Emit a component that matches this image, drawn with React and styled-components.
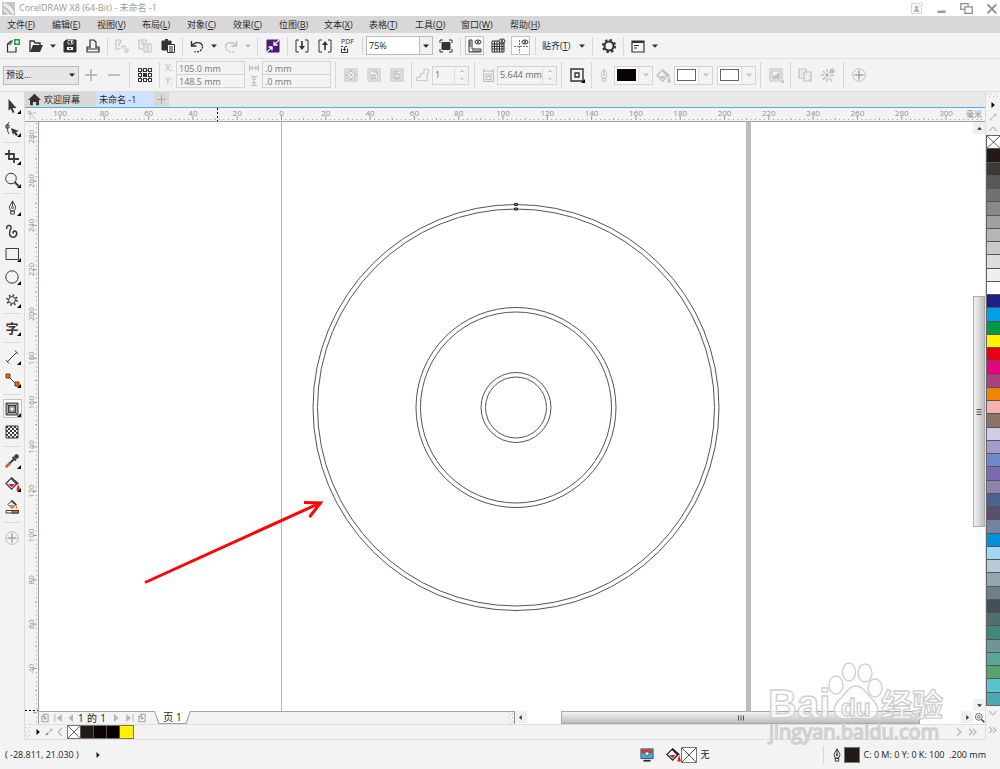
import React, { useState } from 'react';
import styled, { createGlobalStyle } from 'styled-components';

const GlobalStyle = createGlobalStyle`
  * { box-sizing: border-box; }
  body { margin: 0; }
  button, input, select {
    font: inherit;
    color: inherit;
    margin: 0;
    padding: 0;
    border: 0;
    border-radius: 0;
    background: none;
    min-width: 0;
  }
  svg { display: block; flex: none; }
`;

const Page = styled.div`
  min-height: 100vh;
  display: flex;
  flex-direction: column;
  background: #f3f3f3;
  color: #2b2b2b;
  font: 10px/12px 'Open Sans', 'Noto Sans CJK SC', sans-serif;
`;

const TitleBar = styled.header`
  display: flex;
  align-items: center;
  height: 16px;
  padding: 0 2px;
  gap: 4px;
  background: #fff;
  color: #999;
`;

const Title = styled.h1`
  flex: 1;
  margin: 0;
  font-size: 9px;
  font-weight: 400;
`;

const WindowButtons = styled.div`
  display: flex;
  gap: 12px;
`;

const WindowButton = styled.button`
  width: 13px;
  height: 14px;
`;

const MenuBar = styled.nav`
  display: flex;
  align-items: center;
  height: 17px;
  padding-left: 7px;
  background: #d8d8d8;
`;

const MenuItem = styled.button`
  width: ${(p) => p.$width || 45}px;
  text-align: left;
  white-space: nowrap;
  font-size: 9px;
`;

const StandardBar = styled.div`
  display: flex;
  align-items: center;
  height: 26px;
  padding-left: 1px;
  border-bottom: 1px solid #dedede;
`;

const PropertyBar = styled.div`
  display: flex;
  align-items: center;
  height: 33px;
  padding-left: 3px;
  border-bottom: 1px solid #dedede;
  color: #6b6b6b;
`;

const IconButton = styled.button`
  display: flex;
  align-items: center;
  justify-content: center;
  width: 23px;
  height: 23px;
  flex: none;
  color: ${(p) => (p.$dim ? '#bdbdbd' : '#333')};
`;

const CaretButton = styled(IconButton)`
  width: 11px;
`;

const Pressed = styled.span`
  display: flex;
  align-items: center;
  justify-content: center;
  width: 19px;
  height: 19px;
  border: 1px solid #c2c2c2;
  background: #fbfbfb;
`;

const Sep = styled.span`
  flex: none;
  display: flex;
  justify-content: center;
  width: ${(p) => p.$size || 6}px;
  height: ${(p) => (p.$tall ? 26 : 18)}px;
  &::before {
    content: '';
    width: 1px;
    background: #d6d6d6;
  }
`;

const SelectBox = styled.span`
  display: grid;
  align-items: center;
  flex: none;
  width: ${(p) => p.$width}px;
  height: 19px;
  margin: 0 ${(p) => p.$margin}px;
  border: 1px solid #bcbcbc;
  background: ${(p) => p.$bg};
  color: #222;
  > * { grid-area: 1 / 1; }
  > span {
    justify-self: end;
    display: flex;
    align-items: center;
    justify-content: center;
    width: 13px;
    height: 17px;
    pointer-events: none;
    border-left: ${(p) => (p.$divided ? '1px solid #bcbcbc' : '0')};
    background: ${(p) => (p.$divided ? '#f1f1f1' : 'none')};
  }
`;

const Select = styled.select`
  appearance: none;
  width: 100%;
  height: 17px;
  padding-left: 2px;
  font-size: 9px;
`;

const SnapButton = styled.button`
  width: 38px;
  padding-left: 4px;
  text-align: left;
  white-space: nowrap;
  font-size: 9px;
`;

const FieldStack = styled.div`
  display: flex;
  flex-direction: column;
  height: 27px;
`;

const FieldRow = styled.label`
  display: flex;
  align-items: center;
  height: 13px;
  color: #b5b5b5;
  font-size: 9px;
  > span {
    width: ${(p) => p.$label}px;
    display: flex;
    justify-content: center;
  }
`;

const Field = styled.input`
  && {
    width: 69px;
    height: 14px;
    padding-left: 2px;
    border: 1px solid #d4d4d4;
    color: #777;
    font-size: 9px;
  }
`;

const FieldIcon = styled.span`
  display: flex;
  justify-content: center;
  width: ${(p) => p.$width}px;
  color: #bdbdbd;
`;

const Spin = styled.span`
  display: flex;
  width: ${(p) => p.$width}px;
  height: 19px;
  border: 1px solid #d4d4d4;
  font-size: 9px;
`;

const SpinInput = styled.input`
  flex: 1;
  width: 0;
  && { padding-left: 2px; }
`;

const SpinButtons = styled.span`
  display: flex;
  flex-direction: column;
  width: 14px;
  border-left: 1px solid #dedede;
`;

const SpinButton = styled.button`
  flex: 1;
  display: flex;
  align-items: center;
  justify-content: center;
  color: #c4c4c4;
`;

const ColorPick = styled.button`
  && {
    display: flex;
    align-items: center;
    width: 39px;
    height: 19px;
    flex: none;
    margin-right: ${(p) => p.$margin || 0}px;
    border: 1px solid #d4d4d4;
    background: #fdfdfd;
  }
  > i {
    width: 19px;
    height: 12px;
    margin: 0 2px;
    border: 1px solid ${(p) => (p.$color === '#fff' ? '#666' : p.$color)};
    background: ${(p) => p.$color};
  }
  > span {
    flex: 1;
    height: 17px;
    display: flex;
    align-items: center;
    justify-content: center;
    border-left: 1px solid #dedede;
    color: #c4c4c4;
    background: #f3f3f3;
  }
`;

const Main = styled.main`
  flex: 1;
  display: flex;
`;

const Toolbox = styled.aside`
  width: 25px;
  flex: none;
  padding-top: 2px;
  border-right: 1px solid #dcdcdc;
`;

const Tool = styled.button`
  display: grid;
  place-items: center;
  width: 24px;
  height: 23px;
  color: ${(p) => (p.$dim ? '#bdbdbd' : '#3a3a3a')};
  > * { grid-area: 1 / 1; }
`;

const ToolFrame = styled.span`
  width: 19px;
  height: 19px;
  border: 1px solid ${(p) => (p.$on ? '#c2c2c2' : 'transparent')};
  background: ${(p) => (p.$on ? '#fff' : 'none')};
`;

const Flyout = styled.span`
  place-self: end;
  margin: 0 3px 3px 0;
  border: 2px solid #000;
  border-top-color: transparent;
  border-left-color: transparent;
`;

const ToolText = styled.span`
  font: 700 13px/16px 'Noto Sans CJK SC', sans-serif;
`;

const ToolSep = styled.div`
  display: flex;
  align-items: center;
  height: ${(p) => p.$size}px;
  padding: 0 3px;
  &::before {
    content: '';
    flex: 1;
    height: 1px;
    background: #dcdcdc;
  }
`;

const Workspace = styled.section`
  flex: 1;
  min-width: 0;
  display: flex;
  flex-direction: column;
`;

const Tabs = styled.div`
  display: flex;
  height: 16px;
  background: #e8e8e8;
  border-bottom: 1px solid #49b3e6;
`;

const Tab = styled.button`
  && {
    display: flex;
    align-items: center;
    gap: 3px;
    width: ${(p) => p.$width}px;
    padding: 0 3px;
    background: ${(p) => (p.$on ? '#cfe2ff' : '#d8d8d8')};
  }
  font-size: 9px;
  white-space: nowrap;
`;

const RulerRow = styled.div`
  position: relative;
  display: flex;
  height: 14px;
  border-bottom: 1px solid #a2a2a2;
`;

const Unit = styled.span`
  position: absolute;
  right: 2px;
  top: 0;
  padding: 0 1px;
  background: #f3f3f3;
  color: #8a8a8a;
  font-size: 8px;
  line-height: 11px;
`;

const Corner = styled.span`
  display: flex;
  align-items: center;
  justify-content: center;
  width: 14px;
  color: #a0a0a0;
`;

const RulerSvg = styled.svg`
  flex: 1;
  min-width: 0;
  height: 13px;
  font-size: 8px;
`;

const Body = styled.div`
  flex: 1;
  display: flex;
`;

const SideRuler = styled.div`
  display: flex;
  width: 14px;
  border-right: 1px solid #a2a2a2;
  svg {
    width: 13px;
    height: 100%;
    font-size: 8px;
  }
`;

const View = styled.div`
  position: relative;
  flex: 1;
  min-width: 0;
  display: flex;
  flex-direction: column;
`;

const CanvasRow = styled.div`
  flex: 1;
  min-height: 320px;
  display: flex;
  background: #fff;
`;

const Canvas = styled.svg`
  flex: 1;
  min-width: 0;
  height: auto;
`;

const VScroll = styled.div`
  display: flex;
  flex-direction: column;
  width: 12px;
`;

const HScroll = styled.div`
  flex: 471;
  display: flex;
  background: #fff;
`;

const ScrollButton = styled.button`
  && {
    display: flex;
    align-items: center;
    justify-content: center;
    width: 12px;
    height: 12px;
    flex: none;
    background: ${(p) => (p.$plain ? '#fff' : '#f0f0f0')};
    color: #333;
  }
`;

const Gap = styled.span`
  flex: ${(p) => p.$grow};
`;

const Thumb = styled.div`
  flex: ${(p) => p.$grow};
  display: flex;
  align-items: center;
  justify-content: center;
  border: 1px solid #a9a9a9;
  background: linear-gradient(${(p) => (p.$side ? 'to right' : 'to bottom')}, #f1f1f1, #dcdcdc 45%, #bcbcc0);
  color: #555;
`;

const NavRow = styled.div`
  display: flex;
  height: 13px;
`;

const PageNav = styled.div`
  flex: 475;
  display: flex;
  align-items: center;
  border-top: 1px solid #a2a2a2;
  border-right: 1px solid #8f8f8f;
  color: #222;
`;

const NavButton = styled.button`
  display: flex;
  align-items: center;
  justify-content: center;
  width: ${(p) => p.$width || 14}px;
  height: 12px;
  color: #b5b5b5;
`;

const PageCount = styled.span`
  width: 32px;
  display: flex;
  justify-content: space-between;
  padding: 0 2px;
`;

const PageTab = styled.button`
  && {
    width: 37px;
    height: 13px;
    margin: -1px 0 0 5px;
    padding: 0 0 1px;
    background: #a2a2a2;
  }
  clip-path: polygon(0 0, 100% 0, 88% 100%, 12% 100%);
  > span {
    display: block;
    height: 12px;
    background: #fff;
    clip-path: polygon(1px 0, calc(100% - 1px) 0, calc(88% - 1px) 100%, calc(12% + 1px) 100%);
  }
`;

const GripDots = styled.svg`
  margin-left: auto;
  fill: #c4c4c4;
`;

const DocPalette = styled.div`
  display: flex;
  align-items: center;
  height: 16px;
  border-top: 1px solid #dedede;
  border-bottom: 1px solid #dcdcdc;
`;

const DocSwatches = styled.div`
  display: flex;
  height: 14px;
  border: 1px solid #777;
`;

const Swatch = styled.button`
  && {
    display: block;
    width: 13px;
    background: ${(p) => p.$color};
    border: solid #555;
    border-width: ${(p) => (p.$stacked ? '0 0 1px' : '0 1px 0 0')};
  }
  &&:last-child { border-width: 0; }
`;

const MoreColors = styled.span`
  display: flex;
  margin-left: auto;
  padding-right: 5px;
`;

const ColorColumn = styled.aside`
  display: flex;
  flex-direction: column;
  width: 15px;
  flex: none;
  border-left: 1px solid #dcdcdc;
`;

const ColumnButton = styled.button`
  && {
    display: flex;
    align-items: center;
    justify-content: center;
    width: 14px;
    height: ${(p) => p.$height}px;
    color: ${(p) => (p.$dark ? '#000' : '#b9b9b9')};
  }
`;

const ColorList = styled.div`
  flex: 1;
  display: flex;
  flex-direction: column;
  border: 1px solid #666;
  > button {
    flex: 1;
    min-height: 6px;
    && { width: 12px; }
  }
`;

const StatusBar = styled.footer`
  display: flex;
  align-items: center;
  height: 29px;
  padding: 0 14px 0 5px;
  font-size: 9px;
  color: #222;
`;

const StatusGroup = styled.div`
  display: flex;
  align-items: center;
  gap: ${(p) => p.$gap || 0}px;
`;

const StatusSwatch = styled.span`
  display: flex;
  align-items: center;
  justify-content: center;
  width: 16px;
  height: 16px;
  margin-right: 4px;
  border: 1px solid #777;
  background: ${(p) => p.$color};
`;

const FillStatus = styled(StatusGroup)`
  width: 178px;
`;

const Watermark = styled.svg`
  position: absolute;
  right: 38px;
  bottom: -24px;
  width: 182px;
  height: 90px;
  pointer-events: none;
`;

// stroke icons on a 16px grid
const Icon = ({ size = 16, width = 1, children, ...rest }) => (
  <svg width={size} height={size} viewBox="0 0 16 16" fill="none" stroke="currentColor" strokeWidth={width} aria-hidden="true" {...rest}>
    {children}
  </svg>
);

const Caret = ({ dir = 'down', size = 6 }) => {
  const turn = { down: 0, left: 90, up: 180, right: 270 }[dir];
  return (
    <svg width={size} height={size} viewBox="0 0 6 6" aria-hidden="true">
      <path d="M0 1.5h6L3 4.8z" fill="currentColor" transform={`rotate(${turn} 3 3)`} />
    </svg>
  );
};

const Cross = () => (
  <svg width="100%" height="100%" viewBox="0 0 12 12" preserveAspectRatio="none" stroke="#444" strokeWidth=".8" aria-hidden="true">
    <path d="M0 0l12 12M12 0L0 12" />
  </svg>
);

const Grip = () => (
  <GripDots width="6" height="11" aria-hidden="true">
    {[0, 2, 4, 6, 8, 10].map((y) => (
      <path key={y} d={y % 4 ? `M2 ${y}h1v1H2z` : `M0 ${y}h1v1H0zM4 ${y}h1v1H4z`} />
    ))}
  </GripDots>
);

const Chevrons = ({ dir = 'right', double }) => {
  const turn = { right: 0, down: 90, left: 180, up: 270 }[dir];
  return (
    <Icon size={12} width={1.6}>
      <g transform={`rotate(${turn} 8 8)`}>
        {double ? <path d="M3 4l4 4-4 4M8 4l4 4-4 4" /> : <path d="M5.5 3l5 5-5 5" />}
      </g>
    </Icon>
  );
};

const Bucket = ({ color }) => (
  <Icon size={15}>
    <path d="M7 2l6 6-6 6-6-6z" strokeWidth="1.3" />
    <path d="M7 1l8 7-3 1-6-6z" fill="currentColor" stroke="none" />
    <path d="M3.5 8.500h7L7 12z" fill={color} stroke="none" />
    <path d="M14 8.500l2 7h-4z" fill={color} stroke="none" />
  </Icon>
);

const Pen = ({ size = 14 }) => (
  <Icon size={size}>
    <path d="M8 1L4.500 7.500l1.500 4h4l1.500-4zM6 12h4v3H6zM8 1v6" />
    <circle cx="8" cy="8" r="1" />
  </Icon>
);

const Dropper = ({ size = 8, tip = 'currentColor' }) => (
  <Icon size={size} width={1.8}>
    <path d="M2 14l8-8" />
    <path d="M2 14l4-4" stroke={tip} strokeWidth="2.5" />
    <circle cx="12.500" cy="3.500" r="2.300" fill="currentColor" stroke="none" />
    <path d="M8.500 4l3.500 3.500" />
  </Icon>
);

const icons = {
  newDoc: (
    <Icon>
      <path d="M8 3H6L2.500 6v8H11V9" strokeWidth="1.2" /><path d="M6 3v3H3" />
      <path d="M9 1h6v6H9z" fill="#21a148" stroke="none" /><path d="M12 2v4M10 4h4" stroke="#fff" />
    </Icon>
  ),
  open: (
    <Icon>
      <path d="M2 14V3h4l1 2h5v2" strokeWidth="1.3" /><path d="M2 14L5 7h10l-3 7z" fill="currentColor" stroke="none" />
    </Icon>
  ),
  save: (
    <Icon>
      <path d="M2 4l2-2h10v12H2z" fill="currentColor" />
      <path d="M6 2.500h5v3.500H6z" fill="currentColor" stroke="#f3f3f3" strokeWidth=".7" /><path d="M9.500 3v2" stroke="#f3f3f3" />
      <path d="M5 9h6v3H5z" fill="#f3f3f3" stroke="none" /><path d="M7 10.500h2" />
    </Icon>
  ),
  print: (
    <Icon width={1.2}>
      <path d="M5 10V2h4l2 2v6M5 9H2v5h12V9h-3M2 11h12" />
    </Icon>
  ),
  cut: (
    <Icon>
      <path d="M2 2h5v3M2 2v9h4M4 5h3M4 7h2M8 8h3v2M8 8v3M11 11h3v3h-3z" />
    </Icon>
  ),
  copy: (
    <Icon>
      <path d="M2 2h7v3M2 2v9h4M4 4h3M4 6h3M7 6h7v8H7zM9 8h3M9 10h3M9 12h3" />
    </Icon>
  ),
  paste: (
    <Icon>
      <path d="M2 3h9v3H7v6H2z" fill="currentColor" /><path d="M5 2h3" strokeWidth="2" />
      <path d="M7.500 6.500h7v8h-7zM9 9h4M9 11h4M9 13h4" />
    </Icon>
  ),
  undo: (
    <Icon>
      <path d="M2.500 3v5h5M3 8c2-4 9-5 10.500 0" strokeWidth="1.4" /><path d="M13.500 8.500c0 4-4 6-8 5" strokeWidth="1.4" strokeDasharray="2 1.2" />
    </Icon>
  ),
  redo: (
    <Icon>
      <path d="M13.500 3v5h-5M13 8c-2-4-9-5-10.500 0" strokeWidth="1.4" /><path d="M2.500 8.500c0 4 4 6 8 5" strokeWidth="1.4" strokeDasharray="2 1.2" />
    </Icon>
  ),
  connect: (
    <Icon>
      <path d="M2 2h12v12H2z" fill="#4b1a78" stroke="#4b1a78" />
      <path d="M14 2L9.500 6.500M9 3.500V7h3.500M2 14l4.500-4.500M3.500 9H7v3.500" stroke="#fff" strokeWidth="1.3" />
    </Icon>
  ),
  importFile: (
    <Icon>
      <path d="M5 2H2v12h3M11 2h3v12h-3" /><path d="M8 3v7" strokeWidth="1.6" /><path d="M5 8h6l-3 4z" fill="currentColor" stroke="none" />
    </Icon>
  ),
  exportFile: (
    <Icon>
      <path d="M5 2H2v12h3M11 2h3v12h-3" /><path d="M8 5v7" strokeWidth="1.6" /><path d="M5 7h6L8 3z" fill="currentColor" stroke="none" />
    </Icon>
  ),
  full: (
    <Icon>
      <path d="M4 4.500h8v7H4z" fill="currentColor" /><path d="M2 5V2h3M11 2h3v3M14 11v3h-3M5 14H2v-3" />
    </Icon>
  ),
  rulers: (
    <Icon>
      <path d="M2 2h3v9h9v3H2zM2 4h2M2 6h2M2 8h2M6 14v-2M8 14v-2M10 14v-2M12 14v-2" />
      <ellipse cx="11" cy="4" rx="3" ry="2" /><circle cx="11" cy="4" r=".8" />
    </Icon>
  ),
  grid: (
    <Icon>
      <path d="M2 3h12v11H2zM2 6h12M2 8.500h12M2 11h12M4.500 3v11M7 3v11M9.500 3v11M12 3v11" />
      <ellipse cx="12" cy="3" rx="3" ry="2" fill="#f3f3f3" /><circle cx="12" cy="3" r=".8" />
    </Icon>
  ),
  guides: (
    <Icon>
      <path d="M1 8.500h14M6.500 2v13" strokeDasharray="2 1" stroke="#777" /><ellipse cx="12" cy="4" rx="3" ry="2" /><circle cx="12" cy="4" r=".8" />
    </Icon>
  ),
  gear: (
    <Icon>
      <circle cx="8" cy="8" r="4.500" strokeWidth="2" /><circle cx="8" cy="8" r="6.200" strokeWidth="1.800" strokeDasharray="2.430 2.440" />
    </Icon>
  ),
  launcher: (
    <Icon width={1.2}>
      <path d="M2 3h12v11H2z" /><path d="M2 4h12" strokeWidth="2" /><path d="M4 7.500h5M4 10h3" />
    </Icon>
  ),
  origin: (
    <Icon>
      <path d="M3.500 3.500h9v9h-9z" strokeDasharray="1 .6" />
      {[3, 8, 13].map((y) => [3, 8, 13].map((x) => (
        <rect key={`${x}-${y}`} x={x - 1.5} y={y - 1.5} width="3" height="3" fill={x === 8 && y === 8 ? 'currentColor' : '#f3f3f3'} />
      )))}
    </Icon>
  ),
  plus: <Icon><path d="M8 2v12M2 8h12" strokeWidth="1.4" stroke="#aaa" /></Icon>,
  minus: <Icon><path d="M2 8h12" strokeWidth="1.4" stroke="#aaa" /></Icon>,
  plusCircle: <Icon><circle cx="8" cy="8" r="6.300" /><path d="M8 3.500v9M3.500 8h9" strokeWidth="1.500" stroke="#a5a5a5" /></Icon>,
  toCenter: <Icon><path d="M2 2h12v12H2zM4 4h8v8H4zM5 5l6 6M11 5l-6 6" /><path d="M7 4h2M7 12h2M4 7v2M12 7v2" strokeWidth="2" /></Icon>,
  inside: <Icon><path d="M2 2h12v12H2zM4 4h8v8H4z" /><path d="M6 8h3v3H6zM8 5h3v3" strokeWidth="1.300" /></Icon>,
  outside: <Icon><path d="M2 2h12v12H2z" /><path d="M4 4h8v8H4z" /><path d="M6 7h4v4H6zM5 5h3" strokeWidth="1.300" /></Icon>,
  steps: <Icon size={14}><path d="M1 14.500v-4h4v-4h4v-5h5.500v4H13v4h-.5v5z" /></Icon>,
  offset: <Icon size={13}><path d="M1 2.500h14M2 0v5M14 0v5M2 6.500h12v9H2zM5 9h6v4H5z" strokeWidth="1.400" /></Icon>,
  corners: (
    <Icon width={1.4}>
      <path d="M2 2h12v12H2z" /><path d="M6 6h4v4H6z" /><path d="M16 12v4h-4z" fill="#000" stroke="none" />
    </Icon>
  ),
  speed: (
    <Icon>
      <path d="M2 2h12v12H2zM4 4h8v8H4z" /><path d="M5 11V9h2V8h2V6h2v5z" fill="currentColor" stroke="none" />
      <path d="M16 13v3h-3z" fill="currentColor" stroke="none" />
    </Icon>
  ),
  copyProps: <Icon><path d="M2 2h7v3M2 2v9h4M4 4h1M5 6h1M4 8h1M7 5h7v9H7zM9 7h1M11 9h1M9 11h1M12 12h1" strokeWidth="1.2" /></Icon>,
  clear: (
    <Icon>
      <path d="M7 2v3M7 11v4M1 8h3M10 8.500h4M3 4l2 2M3 13l2-3M9 11l3 3M9 6l1-1" strokeWidth="1.400" /><circle cx="7" cy="8" r="1.500" fill="currentColor" />
      <circle cx="12" cy="4" r="2.500" fill="currentColor" stroke="none" />
    </Icon>
  ),
  pick: <Icon><path d="M4.500 1l8 9-4 .2 2 4-1.800.8-2-4.200-2.200 2z" fill="currentColor" stroke="none" /></Icon>,
  shape: <Icon><path d="M5 1C2 5 3 9 5 13M2 4h3v3H2z" /><path d="M7 7l8 3-3 1 2 3-2 1-2-3-1 2z" fill="currentColor" stroke="none" /></Icon>,
  crop: <Icon width={1.8}><path d="M1 5h9v9M5 1v9h10" /></Icon>,
  zoom: <Icon><circle cx="7" cy="6.500" r="5.300" /><path d="M10.500 10l4 4" strokeWidth="2" /></Icon>,
  curve: <Icon><path d="M3 6c-2-4 5-5 4-1-1 3-3 8 1 9 5 1 6-5 3-6-2 0-3 2-1 2" strokeWidth="1.500" /></Icon>,
  rect: <Icon><path d="M2 2.500h12.500v11H2z" /></Icon>,
  ellipse: <Icon><circle cx="8" cy="8" r="6.200" /></Icon>,
  polygon: <Icon><circle cx="8" cy="8" r="3.400" /><circle cx="8" cy="8" r="4.800" strokeWidth="2" strokeDasharray="1.600 2.170" /></Icon>,
  dimension: <Icon><path d="M3 13L13 3" /><path d="M2 11l3 3.500M11 1.500l3 3.500" /></Icon>,
  connector: (
    <Icon>
      <path d="M4 4l8 8" /><path d="M2 2h4v4H2zM11 10h4v4h-4z" fill="#f26b0f" stroke="#6b3a18" />
    </Icon>
  ),
  contour: (
    <Icon>
      <path d="M2 2h12v12H2z" fill="#aaa" /><path d="M4.500 4.500h7v7h-7z" fill="#ddd" /><path d="M2 2l4 4M14 2l-4 4M2 14l4-4M14 14l-4-4" strokeWidth=".7" />
      <path d="M6 6h4v4H6z" fill="#fff" strokeWidth=".8" />
    </Icon>
  ),
  checker: (
    <Icon>
      <path d="M2 2h12v12H2z" />
      {[0, 1, 2, 3, 4, 5].map((r) => [0, 1, 2].map((c) => (
        <rect key={`${r}-${c}`} x={2 + c * 4 + (r % 2) * 2} y={2 + r * 2} width="2" height="2" fill="currentColor" stroke="none" />
      )))}
    </Icon>
  ),
  dropper: <Dropper size={16} tip="#b5673a" />,
  fill: <Bucket color="#e11" />,
  mesh: (
    <Icon>
      <path d="M8 1.500l4 4-4 4-4-4z" /><path d="M8 1l5 4.500-2 .5-4-3.500z" fill="currentColor" stroke="none" />
      <path d="M6 6h4L8 8.500zM12.500 6l1 3.500h-2z" fill="#f26b0f" stroke="none" />
      <path d="M2 11.500h12.500v2.500H2z" fill="#fff" /><path d="M8 11.500h6.500v2.500H8z" fill="#f26b0f" />
    </Icon>
  ),
  home: <Icon size={13}><path d="M8 1L0 8.500h2.500V15H6v-4h4v4h3.500V8.500H16z" fill="#333" stroke="none" /></Icon>,
  page: <Icon size={10}><path d="M6 2h7v12H3V5zM3 6h4V2M8 6v5M5.500 8.500h5" stroke="#777" /></Icon>,
};

const menus = [
  ['文件', 'F'], ['编辑', 'E'], ['视图', 'V'], ['布局', 'L'], ['对象', 'C', 46], ['效果', 'C', 46], ['位图', 'B'],
  ['文本', 'X'], ['表格', 'T', 46], ['工具', 'O', 46], ['窗口', 'W', 49], ['帮助', 'H'],
];

// tool name and whether it has a flyout; a number is a divider of that height
const tools = [
  ['pick', 1], ['shape', 1], 5, ['crop', 1], ['zoom', 1], 5, ['pen', 1], ['curve', 0], ['rect', 1], ['ellipse', 1],
  ['polygon', 1], 5, ['text', 1], 6, ['dimension', 1], ['connector', 1], 6, ['contour', 1], ['checker', 0], 6,
  ['dropper', 1], ['fill', 1], ['mesh', 0], 8, ['plusCircle', 0],
];

const palette = [
  '#231916', '#3e3a39', '#595757', '#727171', '#898989', '#9fa0a0', '#b5b5b6', '#c9caca', '#dcdddd', '#efefef', '#ffffff',
  '#1d2088', '#00a0e9', '#009944', '#fff100', '#e60012', '#e4007f', '#ad4081', '#f08300', '#f4b3b3', '#8b7365', '#d0cce6',
  '#a59aca', '#6c8ac8', '#7b69b0', '#8f82ad', '#4c6390', '#584f6e', '#7286a4', '#0090dc', '#9fd9f6', '#b5cbd7', '#93a5ae',
  '#6f7f87', '#444f57', '#50706c', '#3f8a78', '#6f9695', '#55a896', '#59a26e', '#5bc2d0', '#4da8b5',
];

// pixels per millimetre at 75% zoom
const SCALE = 2.215;

const tickLength = (mm) => {
  if (mm % 20 === 0) return 4;
  return mm % 10 === 0 ? 2 : 1;
};

const TopRuler = () => {
  const marks = [];
  for (let mm = -108; mm <= 500; mm += 2) marks.push(mm);
  return (
    <RulerSvg aria-hidden="true">
      {marks.map((mm) => {
        const x = 242.5 + mm * SCALE;
        const len = tickLength(mm);
        return <path key={mm} d={`M${x} ${12 - len}v${len}`} stroke="#999" />;
      })}
      {marks.filter((mm) => mm % 20 === 0 && mm < 310).map((mm) => (
        <text key={mm} x={242.5 + mm * SCALE} y="8" textAnchor="middle" fill="#8f8f8f">{Math.abs(mm)}</text>
      ))}
      <path d="M178.500 0v13" stroke="#000" strokeDasharray="2 2" />
    </RulerSvg>
  );
};

const LeftRuler = () => {
  const marks = [];
  for (let mm = 286; mm >= 16; mm -= 2) marks.push(mm);
  return (
    <SideRuler>
      <svg aria-hidden="true">
        {marks.map((mm) => {
          const y = 635 - mm * SCALE;
          const len = tickLength(mm);
          return <path key={mm} d={`M${12 - len} ${y}h${len}`} stroke="#999" />;
        })}
        {marks.filter((mm) => mm % 20 === 0 && mm > 20).map((mm) => {
          const y = 635 - mm * SCALE;
          return <text key={mm} x="9" y={y} transform={`rotate(-90 9 ${y})`} textAnchor="middle" fill="#8f8f8f">{mm}</text>;
        })}
        <path d="M0 588.500h13" stroke="#000" strokeDasharray="2 2" />
      </svg>
    </SideRuler>
  );
};

const Drawing = () => (
  <Canvas role="img" aria-label="绘图页面">
    <path d="M242.500 0v2000" stroke="#b8b8b8" />
    <path d="M709.500 0v2000" stroke="#bdbdbd" strokeWidth="5" />
    <g fill="none" stroke="#555">
      {[203, 198.5, 100, 95.5, 35, 30.5].map((r) => <circle key={r} cx="477" cy="285.500" r={r} />)}
    </g>
    <path d="M475.500 81.500h3v2h-3zM475.500 86h3v2h-3z" fill="#888" stroke="#222" />
    <path d="M106 460.500L281 381M265 380.500l16.500.5-11 14" fill="none" stroke="#fe0505" strokeWidth="3" />
  </Canvas>
);

const BaiduMark = () => (
  <Watermark viewBox="0 0 182 90" fontFamily="'Open Sans', 'Noto Sans CJK SC', sans-serif" aria-hidden="true">
    <g fill="#fff" fillOpacity=".7" stroke="#cfcfcf" strokeWidth="1.4">
      <ellipse cx="71" cy="27" rx="7" ry="9" />
      <ellipse cx="84" cy="14" rx="6.500" ry="9" />
      <ellipse cx="100" cy="15" rx="7" ry="9" />
      <ellipse cx="110" cy="30" rx="7" ry="9" />
      <path d="M91 28c8 0 10 8 17 14 8 8 5 19-5 19-5 0-8-1-12-1s-7 1-12 1c-10 0-13-11-5-19 7-6 9-14 17-14z" />
      <text x="3" y="60" fontSize="40" fontWeight="700" fontFamily="'Liberation Sans', sans-serif">Bai</text>
      <text x="76" y="58" fontSize="24" fontWeight="700" fontFamily="'Liberation Sans', sans-serif">du</text>
      <text x="116" y="58" fontSize="31" fontWeight="700">经验</text>
      <text x="4" y="81" fontSize="20">jingyan.baidu.com</text>
    </g>
  </Watermark>
);

const SpinBox = ({ label, value, width }) => (
  <Spin $width={width}>
    <SpinInput aria-label={label} defaultValue={value} />
    <SpinButtons>
      <SpinButton aria-label="增加"><Caret dir="up" size={4} /></SpinButton>
      <SpinButton aria-label="减少"><Caret size={4} /></SpinButton>
    </SpinButtons>
  </Spin>
);

const App = () => {
  const [tool, setTool] = useState('contour');
  const button = (name, label, dim) => <IconButton key={name} $dim={dim} aria-label={label}>{icons[name]}</IconButton>;

  return (
    <Page>
      <GlobalStyle />
      <TitleBar>
        <svg width="13" height="13" viewBox="0 0 13 13" aria-hidden="true">
          <path d="M0 0h13v13H0z" fill="#c4c4c4" /><path d="M1 3c4 1 7 4 10 9M2 1c4 2 7 5 10 10M1 7c2 1 4 3 6 6" stroke="#fff" strokeWidth="1.2" fill="none" />
        </svg>
        <Title>CorelDRAW X8 (64-Bit) - 未命名 -1</Title>
        <WindowButtons>
          <WindowButton aria-label="登录">
            <Icon size={13} stroke="#c4c4c4">
              <path d="M10 2H2v12h12V7" /><path d="M4 12h8l-2-3H6z" fill="#aaa" stroke="none" />
              <circle cx="8" cy="6.500" r="2" fill="#aaa" stroke="none" /><circle cx="13" cy="3" r="2.300" />
            </Icon>
          </WindowButton>
          <WindowButton aria-label="最小化"><Icon size={13} stroke="#999"><path d="M3 12h10" strokeWidth="3" /></Icon></WindowButton>
          <WindowButton aria-label="还原"><Icon size={13} stroke="#888"><path d="M5 9H1V2h9v3M6 6h9v8H6z" strokeWidth="1.500" /></Icon></WindowButton>
          <WindowButton aria-label="关闭"><Icon size={13} stroke="#888"><path d="M3 3l11 11M14 3L3 14" strokeWidth="2" /></Icon></WindowButton>
        </WindowButtons>
      </TitleBar>

      <MenuBar>
        {menus.map(([name, key, width]) => (
          <MenuItem key={name} $width={width}>{name}(<u>{key}</u>)</MenuItem>
        ))}
      </MenuBar>

      <StandardBar>
        {button('newDoc', '新建')}
        {button('open', '打开')}
        <CaretButton aria-label="最近文档"><Caret /></CaretButton>
        {button('save', '保存')}
        {button('print', '打印')}
        <Sep />
        {button('cut', '剪切', true)}
        {button('copy', '复制', true)}
        {button('paste', '粘贴')}
        <Sep />
        {button('undo', '撤消')}
        <CaretButton aria-label="撤消列表"><Caret /></CaretButton>
        {button('redo', '重做', true)}
        <CaretButton $dim aria-label="重做列表"><Caret /></CaretButton>
        <Sep $size={8} />
        {button('connect', '搜索内容')}
        <Sep />
        {button('importFile', '导入')}
        {button('exportFile', '导出')}
        <IconButton aria-label="发布为 PDF">
          <svg width="15" height="16" viewBox="0 0 15 16" fill="none" stroke="currentColor" aria-hidden="true">
            <text x="1" y="6" fontSize="7" fill="currentColor" stroke="none">PDF</text>
            <path d="M1 8.500h2M5 8.500h2M1.500 10.500v4h6v-4M4.500 9v4M3 11.500h3" />
          </svg>
        </IconButton>
        <Sep />
        <SelectBox $width={67} $margin={1} $bg="#fff" $divided>
          <Select aria-label="缩放级别" defaultValue="75%"><option>75%</option><option>100%</option></Select>
          <span><Caret /></span>
        </SelectBox>
        {button('full', '全屏预览')}
        <Sep />
        <IconButton aria-label="显示标尺"><Pressed>{icons.rulers}</Pressed></IconButton>
        {button('grid', '显示网格')}
        <IconButton aria-label="显示辅助线"><Pressed>{icons.guides}</Pressed></IconButton>
        <Sep />
        <SnapButton>贴齐(<u>T</u>)</SnapButton>
        <CaretButton aria-label="贴齐选项"><Caret /></CaretButton>
        <Sep $size={10} />
        {button('gear', '选项')}
        <Sep />
        {button('launcher', '应用程序启动器')}
        <CaretButton aria-label="启动器列表"><Caret /></CaretButton>
      </StandardBar>

      <PropertyBar>
        <SelectBox $width={76} $margin={0} $bg="#e6e6e6">
          <Select aria-label="预设" defaultValue="预设..."><option>预设...</option></Select>
          <span><Caret /></span>
        </SelectBox>
        {button('plus', '添加预设', true)}
        {button('minus', '删除预设', true)}
        <Sep $size={8} $tall />
        {button('origin', '对象原点')}
        <Sep $tall />
        <FieldStack>
          <FieldRow $label={14}><span>X:</span><Field defaultValue="105.0 mm" /></FieldRow>
          <FieldRow $label={14}><span>Y:</span><Field defaultValue="148.5 mm" /></FieldRow>
        </FieldStack>
        <FieldStack>
          <FieldRow $label={17}>
            <span><Icon size={10}><path d="M1 3v10M15 3v10M1 8h14M5 5v6M11 5v6" strokeWidth="1.500" /></Icon></span>
            <Field aria-label="宽度" defaultValue=".0 mm" />
          </FieldRow>
          <FieldRow $label={17}>
            <span><Icon size={10}><path d="M3 1h10M3 15h10M8 1v14M5 5h6M5 11h6" strokeWidth="1.500" /></Icon></span>
            <Field aria-label="高度" defaultValue=".0 mm" />
          </FieldRow>
        </FieldStack>
        <Sep $size={8} $tall />
        {button('toCenter', '到中心', true)}
        {button('inside', '内部轮廓', true)}
        {button('outside', '外部轮廓', true)}
        <Sep $tall />
        <FieldIcon $width={18}>{icons.steps}</FieldIcon>
        <SpinBox label="轮廓图步长" value="1" width={37} />
        <Sep $size={10} $tall />
        <FieldIcon $width={18}>{icons.offset}</FieldIcon>
        <SpinBox label="轮廓图偏移" value="5.644 mm" width={60} />
        <Sep $size={8} $tall />
        {button('corners', '轮廓图角')}
        <Sep $tall />
        <FieldIcon $width={20}><Pen /></FieldIcon>
        <ColorPick $color="#0a0202" aria-label="轮廓色"><i /><span><Caret /></span></ColorPick>
        <FieldIcon $width={21}><Bucket color="currentColor" /></FieldIcon>
        <ColorPick $color="#fff" $margin={4} aria-label="填充色"><i /><span><Caret /></span></ColorPick>
        <ColorPick $color="#fff" aria-label="最后一个填充挑选器"><i /><span><Caret /></span></ColorPick>
        <Sep $size={8} $tall />
        {button('speed', '对象和颜色加速', true)}
        <Sep $tall />
        {button('copyProps', '复制轮廓图属性', true)}
        {button('clear', '清除轮廓', true)}
        <Sep $size={8} $tall />
        {button('plusCircle', '快速自定义', true)}
      </PropertyBar>

      <Main>
        <Toolbox>
          {tools.map((item, i) => {
            if (typeof item === 'number') return <ToolSep key={i} $size={item} />;
            const [name, flyout] = item;
            return (
              <Tool key={name} aria-label={name} $dim={name === 'plusCircle'} onClick={() => setTool(name)}>
                <ToolFrame $on={tool === name} />
                {name === 'text' ? <ToolText>字</ToolText> : name === 'pen' ? <Pen size={15} /> : icons[name]}
                {flyout ? <Flyout /> : null}
              </Tool>
            );
          })}
        </Toolbox>

        <Workspace>
          <Tabs>
            <Tab $width={71}>{icons.home}欢迎屏幕</Tab>
            <Tab $width={58} $on>未命名 -1</Tab>
            <Tab $width={15} aria-label="新建文档"><Icon size={9} width={2} stroke="#aaa"><path d="M8 0v16M0 8h16" /></Icon></Tab>
          </Tabs>
          <RulerRow>
            <Corner><Icon size={10}><path d="M1 5h14M5 1v14M5 5l9 10M1 1l4 4" strokeWidth="1.300" strokeDasharray="3 1" /></Icon></Corner>
            <TopRuler />
            <Unit>毫米</Unit>
          </RulerRow>
          <Body>
            <LeftRuler />
            <View>
              <CanvasRow>
                <Drawing />
                <VScroll>
                  <ScrollButton aria-label="向上"><Caret dir="up" size={5} /></ScrollButton>
                  <Gap $grow={163} />
                  <Thumb $side $grow={229}><Icon size={8} width={2}><path d="M3 3h10M3 8h10M3 13h10" /></Icon></Thumb>
                  <Gap $grow={173} />
                  <ScrollButton aria-label="向下"><Caret size={5} /></ScrollButton>
                </VScroll>
              </CanvasRow>
              <NavRow>
                <PageNav>
                  <NavButton $width={12} aria-label="添加页面">{icons.page}</NavButton>
                  <NavButton aria-label="首页"><Icon size={10} width={1.6}><path d="M3 2v12" /><path d="M14 2v12L6 8z" fill="currentColor" stroke="none" /></Icon></NavButton>
                  <NavButton $width={11} aria-label="上一页"><Caret dir="left" size={8} /></NavButton>
                  <PageCount><span>1</span><span>的</span><span>1</span></PageCount>
                  <NavButton $width={16} aria-label="下一页"><Caret dir="right" size={8} /></NavButton>
                  <NavButton $width={11} aria-label="末页"><Icon size={10} width={1.6}><path d="M13 2v12" /><path d="M2 2v12l8-6z" fill="currentColor" stroke="none" /></Icon></NavButton>
                  <NavButton aria-label="在后面添加页面">{icons.page}</NavButton>
                  <PageTab><span>页 1</span></PageTab>
                  <Grip />
                </PageNav>
                <HScroll>
                  <ScrollButton aria-label="向左"><Caret dir="left" size={5} /></ScrollButton>
                  <Gap $grow={35} />
                  <Thumb $grow={358}><Icon size={8} width={2}><path d="M3 3v10M8 3v10M13 3v10" /></Icon></Thumb>
                  <Gap $grow={41} />
                  <ScrollButton aria-label="向右"><Caret dir="right" size={5} /></ScrollButton>
                  <ScrollButton $plain aria-label="导航器"><Icon size={11}><circle cx="7" cy="7" r="5" /><circle cx="7" cy="7" r="2" /><path d="M11 11l4 4" strokeWidth="2" /></Icon></ScrollButton>
                </HScroll>
              </NavRow>
              <BaiduMark />
            </View>
          </Body>
          <DocPalette>
            <NavButton $width={6} as="span"><Grip /></NavButton>
            <ColumnButton $height={14} $dark aria-label="文档调色板"><Caret dir="right" /></ColumnButton>
            <NavButton $width={8} aria-label="滴管"><Dropper tip="#777" /></NavButton>
            <NavButton aria-label="向左滚动"><Chevrons dir="left" /></NavButton>
            <DocSwatches>
              <Swatch $color="#fff" aria-label="无颜色"><Cross /></Swatch>
              <Swatch $color="#231916" aria-label="黑" />
              <Swatch $color="#0d0304" aria-label="深黑" />
              <Swatch $color="#030000" aria-label="纯黑" />
              <Swatch $color="#fff100" aria-label="黄" />
            </DocSwatches>
            <MoreColors>
              <NavButton aria-label="向右滚动"><Chevrons /></NavButton>
              <NavButton aria-label="展开"><Chevrons double /></NavButton>
            </MoreColors>
          </DocPalette>
        </Workspace>

        <ColorColumn>
          <ColumnButton $height={7} as="span">
            <svg width="12" height="4" fill="#c4c4c4" aria-hidden="true">
              <path d="M0 0h1v1H0zM4 0h1v1H4zM8 0h1v1H8zM2 2h1v1H2zM6 2h1v1H6zM10 2h1v1h-1z" />
            </svg>
          </ColumnButton>
          <ColumnButton $height={12} $dark aria-label="调色板菜单"><Caret dir="right" /></ColumnButton>
          <ColumnButton $height={12} aria-label="滴管"><Dropper /></ColumnButton>
          <ColumnButton $height={12} aria-label="向上滚动"><Chevrons dir="up" /></ColumnButton>
          <ColorList>
            <Swatch $stacked $color="#fff" aria-label="无颜色"><Cross /></Swatch>
            {palette.map((c) => <Swatch key={c} $stacked $color={c} aria-label={c} />)}
          </ColorList>
          <ColumnButton $height={14} aria-label="向下滚动"><Chevrons dir="down" /></ColumnButton>
          <ColumnButton $height={20} aria-label="展开调色板"><Chevrons double /></ColumnButton>
        </ColorColumn>
      </Main>

      <StatusBar>
        <StatusGroup $gap={16}>
          <span>( -28.811, 21.030 )</span>
          <Caret dir="right" />
        </StatusGroup>
        <Gap $grow={1} />
        <FillStatus $gap={12}>
          <Icon size={14}>
            <path d="M1 1h14v11H1z" fill="#30b2ee" stroke="#444" /><path d="M2 2h12v4H2z" fill="#ee2a2a" stroke="none" />
            <circle cx="8" cy="6.500" r="2.500" fill="#ddd" stroke="#555" /><path d="M4 14.500h8" strokeWidth="2" />
          </Icon>
          <StatusGroup>
            <Bucket color="#e11" />
            <StatusSwatch $color="#fff"><Cross /></StatusSwatch>
            <span>无</span>
          </StatusGroup>
        </FillStatus>
        <Sep $size={12} />
        <StatusGroup>
          <Pen />
          <StatusSwatch $color="#231916" />
          <span>C: 0 M: 0 Y: 0 K: 100&nbsp; .200 mm</span>
        </StatusGroup>
      </StatusBar>
    </Page>
  );
};

export default App;
